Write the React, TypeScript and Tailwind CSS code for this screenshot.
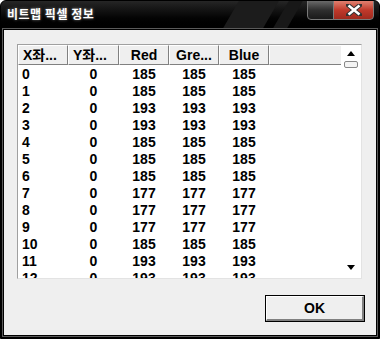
import React from "react";

const rows: [number, number, number][] = [
  [0, 0, 185],
  [1, 0, 185],
  [2, 0, 193],
  [3, 0, 193],
  [4, 0, 185],
  [5, 0, 185],
  [6, 0, 185],
  [7, 0, 177],
  [8, 0, 177],
  [9, 0, 177],
  [10, 0, 185],
  [11, 0, 193],
  [12, 0, 193],
];

const headers = ["X좌...", "Y좌...", "Red", "Gre...", "Blue"];

export default function App() {
  return (
    <div
      className="relative w-[380px] h-[339px] bg-black flex flex-col overflow-hidden rounded-t-[6px] border border-black"
      style={{ fontFamily: '"Liberation Sans", "Noto Sans CJK KR", sans-serif' }}
    >
      {/* title bar */}
      <div className="relative h-[27px] shrink-0 bg-gradient-to-b from-[#262626] via-[#0b0b0b] to-black">
        <div className="absolute left-[230px] top-0 h-full w-[40px] -skew-x-[30deg] bg-[#1c1c1c]" />
        <div className="absolute left-[280px] top-0 h-full w-[14px] -skew-x-[30deg] bg-[#181818]" />
        <span
          className="absolute left-[6px] top-[6px] text-[12px] font-bold text-white leading-[14px] tracking-[0.5px]"
          style={{ fontFamily: '"Noto Sans CJK KR", sans-serif', textShadow: "0 0 3px rgba(255,255,255,0.5)" }}
        >
          비트맵 픽셀 정보
        </span>
        <div className="absolute left-[306px] top-[-1px] h-[20px] w-[27px] rounded-bl-[4px] border border-[#7a7a7a] bg-gradient-to-b from-[#6a6a6a] via-[#303030] to-[#1a1a1a]" />
        <div className="absolute left-[332px] top-[-1px] h-[20px] w-[41px] rounded-br-[4px] border border-[#7a7a7a] bg-gradient-to-b from-[#e08070] via-[#c0392b] to-[#a02a1e] flex items-center justify-center">
          <svg width="16" height="12" viewBox="0 0 16 12">
            <path d="M2 1 L14 11 M14 1 L2 11" stroke="#333" strokeWidth="4.5" strokeLinecap="square" />
            <path d="M2.5 1.5 L13.5 10.5 M13.5 1.5 L2.5 10.5" stroke="#fff" strokeWidth="2.5" />
          </svg>
        </div>
      </div>

      {/* frame */}
      <div className="flex-1 border-[1px] border-[#5a5a5a] mx-[1px] mb-[1px] flex">
        <div className="flex-1 border border-black flex">
          <div className="flex-1 bg-[#efefef] flex flex-col pl-[13px] pr-[11px] pt-[14px]">
            {/* list view */}
            <div className="relative h-[235px] w-[345px] bg-white border border-[#a0a0a0] border-b-[#e3e3e3] border-r-[#e3e3e3] overflow-hidden text-[14px] font-bold text-black">
              <div className="flex h-[20px] w-[324px]">
                {headers.map((h, i) => (
                  <div
                    key={h}
                    className={
                      "h-[20px] bg-[#efefef] border-t border-l border-t-white border-l-white border-r border-b border-r-[#808080] border-b-[#808080] flex items-center leading-none " +
                      (i === 0 ? "w-[50px] justify-start pl-[4px]" : i === 1 ? "w-[51px] justify-start pl-[4px]" : "w-[50px] justify-center")
                    }
                  >
                    {h}
                  </div>
                ))}
                <div className="flex-1 h-[20px] bg-[#efefef] border-t border-l border-t-white border-l-white border-b border-b-[#808080]" />
              </div>
              {rows.map(([x, y, v]) => (
                <div key={x} className="flex h-[17px] items-center leading-none">
                  <div className="w-[50px] pl-[4px]">{x}</div>
                  <div className="w-[51px] text-center">{y}</div>
                  <div className="w-[50px] text-center">{v}</div>
                  <div className="w-[50px] text-center">{v}</div>
                  <div className="w-[50px] text-center">{v}</div>
                </div>
              ))}
              {/* scrollbar */}
              <div className="absolute right-0 top-0 bottom-0 w-[20px] bg-white">
                <svg className="absolute left-[6px] top-[6px]" width="8" height="5" viewBox="0 0 8 5">
                  <path d="M0 5 L4 0 L8 5 Z" fill="#000" />
                </svg>
                <div className="absolute left-[3px] top-[16px] h-[7px] w-[14px] rounded-[2px] border border-[#888] bg-[#f4f4f4]" />
                <svg className="absolute left-[6px] bottom-[8px]" width="8" height="5" viewBox="0 0 8 5">
                  <path d="M0 0 L8 0 L4 5 Z" fill="#000" />
                </svg>
              </div>
            </div>
            {/* ok button */}
            <div className="flex justify-end mt-[16px]">
              <button className="h-[27px] w-[100px] bg-[#efefef] border border-black flex items-stretch p-0">
                <span className="flex-1 flex items-center justify-center border-t border-l border-t-white border-l-white border-r-2 border-b-2 border-r-[#808080] border-b-[#808080] text-[14px] font-bold text-black">
                  OK
                </span>
              </button>
            </div>
          </div>
        </div>
      </div>
    </div>
  );
}
